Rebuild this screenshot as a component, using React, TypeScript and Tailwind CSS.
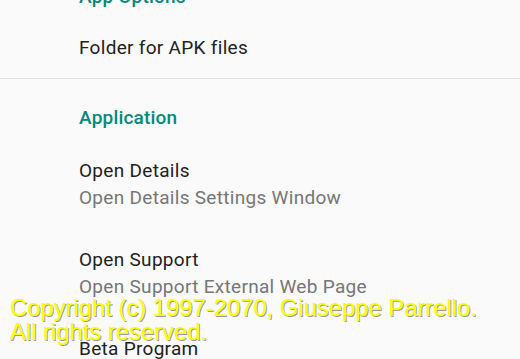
import React from "react";

function Item({ title, subtitle }: { title: string; subtitle?: string }) {
  return (
    <div className="flex flex-col">
      <div className="h-[25px] leading-[25px] text-[19px] tracking-[0.3px] text-[#212121] whitespace-nowrap">{title}</div>
      {subtitle && (
        <div className="mt-[2px] h-[25px] leading-[25px] text-[19px] tracking-[0.3px] text-[#767676] whitespace-nowrap">
          {subtitle}
        </div>
      )}
    </div>
  );
}

function Header({ text }: { text: string }) {
  return (
    <div className="h-[24px] leading-[24px] text-[19px] tracking-[0.2px] font-medium text-[#00897b] whitespace-nowrap">
      {text}
    </div>
  );
}

export default function App() {
  return (
    <div
      className="relative w-[520px] h-[359px] overflow-hidden bg-[#fafafa]"
      style={{ fontFamily: "Roboto, 'Noto Sans', sans-serif" }}
    >
      <div className="flex flex-col">
        <div className="-mt-[15px] pl-[79px]">
          <Header text="App Options" />
        </div>
        <div className="pl-[79px] pt-[26px]">
          <Item title="Folder for APK files" />
        </div>
        <div className="mt-[18px] h-px bg-[#e0e0e0]" />
        <div className="pl-[79px] pt-[27px]">
          <Header text="Application" />
        </div>
        <div className="pl-[79px] pt-[28px]">
          <Item title="Open Details" subtitle="Open Details Settings Window" />
        </div>
        <div className="pl-[79px] pt-[37px]">
          <Item title="Open Support" subtitle="Open Support External Web Page" />
        </div>
        <div className="pl-[79px] pt-[37px]">
          <Item title="Beta Program" subtitle="Join the Beta Program" />
        </div>
      </div>
      <div
        className="absolute left-[10px] top-[296px] text-[23.8px] leading-[24px] text-[#ffff00] whitespace-nowrap"
        style={{ fontFamily: "'Liberation Sans', Arial, sans-serif", textShadow: "1px 1px 0 rgba(110,110,110,0.7)" }}
      >
        <div>Copyright (c) 1997-2070, Giuseppe Parrello.</div>
        <div>All rights reserved.</div>
      </div>
    </div>
  );
}
